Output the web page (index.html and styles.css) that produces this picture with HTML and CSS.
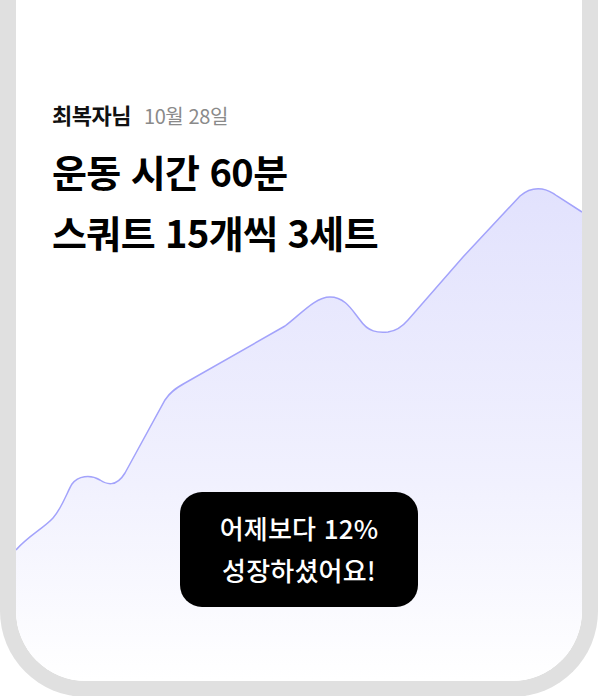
FILE: index.html
```html
<!DOCTYPE html>
<html lang="ko">
<head>
<meta charset="utf-8">
<link rel="stylesheet" href="styles.css">
</head>
<body>
<div class="frame">
  <div class="screen">
    <svg class="chart" viewBox="16 0 566 680" preserveAspectRatio="none" aria-hidden="true">
      <defs>
        <linearGradient id="fillGrad" x1="0" y1="0" x2="0" y2="1" gradientUnits="objectBoundingBox">
          <stop offset="0" stop-color="#e2e2fd"/>
          <stop offset="0.6" stop-color="#f1f1fe"/>
          <stop offset="1" stop-color="#ffffff"/>
        </linearGradient>
      </defs>
      <path class="area" d="M16,550 C28,536 44,528 53,518 C62,508 68,490 72,484 C78,476 90,474 100,480 C106,484 116,488 125,473 L165,400 C170,392 176,388 185,383 L285,326 C300,315 315,297 330,297 C345,297 352,310 360,320 C368,332 378,333 388,332 C396,331 402,327 408,320 L463,257 L520,196 C528,189 535,188 542,189 C548,190 553,193 557,196 L582,212 L582,680 L16,680 Z"/>
      <path class="line" d="M16,550 C28,536 44,528 53,518 C62,508 68,490 72,484 C78,476 90,474 100,480 C106,484 116,488 125,473 L165,400 C170,392 176,388 185,383 L285,326 C300,315 315,297 330,297 C345,297 352,310 360,320 C368,332 378,333 388,332 C396,331 402,327 408,320 L463,257 L520,196 C528,189 535,188 542,189 C548,190 553,193 557,196 L582,212"/>
    </svg>
    <div class="content">
      <div class="meta">
        <span class="name">최복자님</span>
        <span class="date">10월 28일</span>
      </div>
      <h1 class="title">운동 시간 60분<br>스쿼트 15개씩 3세트</h1>
    </div>
    <div class="bubble">어제보다 12%<br>성장하셨어요!</div>
  </div>
</div>
</body>
</html>
```

FILE: styles.css
```css
* { box-sizing: border-box; }
html, body {
  margin: 0;
  padding: 0;
  background: #ffffff;
  width: 598px;
  height: 696px;
  overflow: hidden;
}
body {
  font-family: "Noto Sans CJK KR", "Noto Sans", sans-serif;
}
.frame {
  width: 598px;
  height: 697px;
  border: 16px solid #e0e0e0;
  border-top: 0;
  border-radius: 0 0 86px 86px;
  overflow: hidden;
}
.screen {
  position: relative;
  width: 100%;
  height: 100%;
  background: #ffffff;
  border-radius: 0 0 70px 70px;
  overflow: hidden;
}
.chart {
  position: absolute;
  left: 0;
  top: 0;
  width: 566px;
  height: 680px;
}
.chart .area { fill: url(#fillGrad); }
.chart .line {
  fill: none;
  stroke: #a3a3fb;
  stroke-width: 1.5;
}
.content {
  position: relative;
  padding: 98px 0 0 36px;
}
.meta {
  display: flex;
  align-items: baseline;
  gap: 13px;
  height: 34px;
}
.name {
  font-size: 22px;
  font-weight: 700;
  color: #111;
  letter-spacing: -0.5px;
}
.date {
  font-size: 20px;
  font-weight: 400;
  color: #8a8a8a;
  letter-spacing: -0.4px;
}
.title {
  margin: 8px 0 0;
  font-size: 38px;
  font-weight: 700;
  line-height: 61px;
  color: #000;
  letter-spacing: -0.6px;
}
.bubble {
  position: absolute;
  left: 164px;
  top: 492px;
  width: 238px;
  height: 115px;
  border-radius: 22px;
  background: #000;
  color: #fff;
  font-size: 26px;
  font-weight: 500;
  line-height: 42px;
  text-align: center;
  padding-top: 15px;
  letter-spacing: 0.2px;
}
```
